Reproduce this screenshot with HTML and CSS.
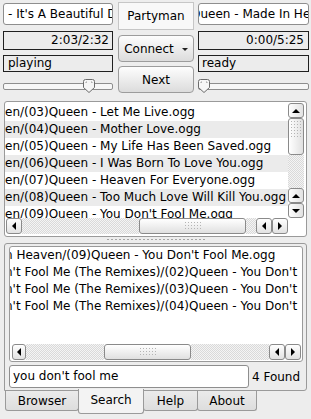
FILE: index.html
```html
<!DOCTYPE html>
<html lang="en">
  <head>
    <meta charset="UTF-8" />
    <meta name="viewport" content="width=device-width, initial-scale=1.0" />
    <title>Partyman</title>
    <link rel="stylesheet" href="styles.css">
  </head>
  <body>
    <div class="top">
      <div class="side">
        <div class="title"><span>- It's A Beautiful Day</span></div>
        <div class="lcd">2:03/2:32</div>
        <div class="status">playing</div>
        <div class="slider">
          <span class="knob" style="left: 80px">
            <svg width="12" height="14" viewBox="0 0 12 14"><path d="M0.5 2.5Q0.5 0.5 2.5 0.5H9.5Q11.5 0.5 11.5 2.5V8.5L6 13.5L0.5 8.5Z" fill="#f6f6f6" stroke="#6c6c6c"/><path d="M3 4V3H4M8 3H9V4" fill="none" stroke="#a0a0a0"/></svg>
          </span>
        </div>
      </div>
      <div class="mid">
        <div class="brand">Partyman</div>
        <button class="btn">Connect<span class="caret"></span></button>
        <button class="btn">Next</button>
      </div>
      <div class="side right">
        <div class="title"><span>Queen - Made In Heaven</span></div>
        <div class="lcd">0:00/5:25</div>
        <div class="status">ready</div>
        <div class="slider">
          <span class="knob" style="left: 0px">
            <svg width="12" height="14" viewBox="0 0 12 14"><path d="M0.5 2.5Q0.5 0.5 2.5 0.5H9.5Q11.5 0.5 11.5 2.5V8.5L6 13.5L0.5 8.5Z" fill="#f6f6f6" stroke="#6c6c6c"/><path d="M3 4V3H4M8 3H9V4" fill="none" stroke="#a0a0a0"/></svg>
          </span>
        </div>
      </div>
    </div>

    <div class="playlist">
      <div class="list">
        <div class="row">en/(03)Queen - Let Me Live.ogg</div>
        <div class="row alt">en/(04)Queen - Mother Love.ogg</div>
        <div class="row">en/(05)Queen - My Life Has Been Saved.ogg</div>
        <div class="row alt">en/(06)Queen - I Was Born To Love You.ogg</div>
        <div class="row">en/(07)Queen - Heaven For Everyone.ogg</div>
        <div class="row alt">en/(08)Queen - Too Much Love Will Kill You.ogg</div>
        <div class="row">en/(09)Queen - You Don't Fool Me.ogg</div>
      </div>
      <div class="vscroll">
        <span class="sbtn up"></span>
        <span class="vthumb"><i class="grip"></i></span>
        <span class="trough"></span>
        <span class="sbtn up"></span>
        <span class="sbtn down"></span>
      </div>
      <div class="hscroll">
        <span class="sbtn left"></span>
        <span class="trough"></span>
        <span class="hthumb wide"><i class="grip"></i></span>
        <span class="trough gap"></span>
        <span class="sbtn left"></span>
        <span class="sbtn right"></span>
      </div>
      <div class="corner"></div>
    </div>

    <div class="splitter"><i></i></div>

    <div class="pane">
      <div class="results">
        <div class="list">
          <div class="row">n Heaven/(09)Queen - You Don't Fool Me.ogg</div>
          <div class="row">n't Fool Me (The Remixes)/(02)Queen - You Don't Fool Me</div>
          <div class="row">n't Fool Me (The Remixes)/(03)Queen - You Don't Fool Me</div>
          <div class="row">n't Fool Me (The Remixes)/(04)Queen - You Don't Fool Me</div>
        </div>
        <div class="hscroll">
          <span class="sbtn left"></span>
          <span class="trough"></span>
          <span class="hthumb narrow"><i class="grip"></i></span>
          <span class="trough"></span>
          <span class="sbtn left"></span>
          <span class="sbtn right"></span>
        </div>
      </div>
      <div class="search-row">
        <div class="search-input">you don't fool me</div>
        <span class="found">4 Found</span>
      </div>
    </div>

    <div class="tabs">
      <div class="tab browser">Browser</div>
      <div class="tab search on">Search</div>
      <div class="tab help">Help</div>
      <div class="tab about">About</div>
    </div>
  </body>
</html>
```

FILE: styles.css
```css
* {
  box-sizing: border-box;
}
body {
  margin: 0;
  width: 311px;
  height: 419px;
  overflow: hidden;
  background: #ededed;
  font-family: "DejaVu Sans", "Noto Sans", sans-serif;
  font-size: 12px;
  color: #000;
}

/* top player controls */
.top {
  display: grid;
  grid-template-columns: 110px 85px 111px;
  height: 94px;
  padding-left: 3px;
}
.side {
  display: flex;
  flex-direction: column;
  padding-top: 3px;
}
.title {
  height: 22px;
  border: 1px solid #8e8e8e;
  border-radius: 3px;
  background: #fff;
  padding: 0 4px;
  line-height: 20px;
  white-space: nowrap;
  overflow: hidden;
}
.right .title {
  padding-left: 0;
}
.right .title span {
  margin-left: -8px;
}
.lcd {
  margin-top: 6px;
  height: 19px;
  border: 1px solid #202020;
  background: #ececec;
  text-align: right;
  padding-right: 3px;
  line-height: 17px;
}
.right .lcd {
  padding-right: 4px;
}
.status {
  margin-top: 5px;
  height: 17px;
  border: 1px solid #202020;
  background: #ececec;
  padding-left: 4px;
  line-height: 15px;
}
.right .status {
  padding-left: 3px;
}
.slider {
  position: relative;
  margin-top: 4px;
  height: 17px;
}
.slider::before {
  content: "";
  position: absolute;
  left: 0;
  right: 0;
  top: 7px;
  height: 5px;
  border: 1px solid #8e8e8e;
  border-radius: 2px;
  background: #f7f7f7;
}
.knob {
  position: absolute;
  top: 3px;
  width: 12px;
  height: 14px;
}
.knob svg {
  display: block;
}
.mid {
  display: flex;
  flex-direction: column;
  margin: 0 4px 0 5px;
  padding-top: 2px;
}
.brand {
  height: 28px;
  border: 1px solid #c6c6c6;
  background: #f8f8f8;
  text-align: center;
  line-height: 26px;
}
.btn {
  margin-top: 5px;
  height: 27px;
  padding: 0;
  border: 1px solid #9c9c9c;
  border-radius: 4px;
  background: linear-gradient(#fdfdfd, #dcdcdc);
  font: inherit;
  color: #000;
}
.btn + .btn {
  margin-top: 4px;
}
.caret {
  display: inline-block;
  margin-left: 8px;
  vertical-align: middle;
  border-style: solid;
  border-width: 3px 3px 0;
  border-color: #222 transparent transparent;
}

/* lists */
.playlist {
  margin: 7px 4px 0;
  height: 136px;
  border: 1px solid #9a9a9a;
  border-radius: 3px;
  background: #fff;
  padding: 1px 2px 2px 0;
  display: grid;
  grid-template-columns: minmax(0, 1fr) 16px;
  grid-template-rows: minmax(0, 1fr) 16px;
}
.list {
  overflow: hidden;
  padding-top: 1px;
}
.row {
  height: 17px;
  line-height: 17px;
  white-space: nowrap;
}
.row.alt {
  background: #ebebeb;
}
.vscroll {
  display: flex;
  flex-direction: column;
}
.hscroll {
  display: flex;
  padding-left: 1px;
}
.corner {
  background: #fff;
}
.sbtn {
  flex: none;
  display: flex;
  align-items: center;
  justify-content: center;
  width: 16px;
  height: 15px;
  border: 1px solid #8a8a8a;
  border-radius: 3px;
  background: linear-gradient(90deg, #fefefe, #e2e2e2);
}
.hscroll .sbtn {
  height: 16px;
  background: linear-gradient(#fefefe, #e2e2e2);
}
.sbtn::before {
  content: "";
  border-style: solid;
  border-color: transparent;
}
.up::before {
  border-width: 0 4px 4px;
  border-bottom-color: #000;
}
.down::before {
  border-width: 4px 4px 0;
  border-top-color: #000;
}
.left::before {
  border-width: 4px 4px 4px 0;
  border-right-color: #000;
}
.right::before {
  border-width: 4px 0 4px 4px;
  border-left-color: #000;
}
.trough {
  flex: 1;
  background: repeating-conic-gradient(#d9d9d9 0 25%, #f4f4f4 0 50%) 0 0 / 2px 2px;
}
.trough.gap {
  flex: none;
  width: 10px;
}
.vthumb,
.hthumb {
  flex: none;
  display: flex;
  justify-content: center;
  border: 1px solid #8a8a8a;
  border-radius: 3px;
}
.vthumb {
  height: 37px;
  padding-top: 2px;
  background: linear-gradient(90deg, #ffffff, #e0e0e0);
}
.hthumb {
  align-items: center;
  background: linear-gradient(#ffffff, #e0e0e0);
}
.hthumb.wide {
  width: 107px;
}
.hthumb.narrow {
  width: 87px;
}
.grip {
  background: conic-gradient(at 1px 1px, transparent 75%, #b4b4b4 0) 0 0 / 3px 3px;
}
.vthumb .grip {
  width: 10px;
  height: 18px;
}
.hthumb .grip {
  width: 16px;
  height: 8px;
}
.splitter {
  display: flex;
  justify-content: center;
  height: 6px;
  padding-top: 2px;
}
.splitter i {
  width: 98px;
  height: 1px;
  background: repeating-linear-gradient(90deg, #a6a6a6 0 2px, transparent 2px 4px);
}

/* search pane */
.pane {
  margin: 0 4px;
  height: 148px;
  border: 1px solid #9a9a9a;
  border-radius: 3px 3px 3px 0;
  padding: 2px 3px 2px 4px;
}
.results {
  height: 116px;
  border: 1px solid #9a9a9a;
  border-radius: 3px;
  background: #fff;
  padding: 0 1px 1px 0;
  display: grid;
  grid-template-rows: minmax(0, 1fr) 16px;
  grid-template-columns: minmax(0, 1fr);
}
.results .list {
  padding-top: 0;
}
.results .row {
  text-indent: -5px;
}
.results .hscroll {
  padding-left: 2px;
}
.results .sbtn:first-child {
  width: 14px;
}
.search-row {
  display: flex;
  align-items: center;
  margin-top: 3px;
  height: 23px;
}
.search-input {
  width: 240px;
  height: 23px;
  border: 1px solid #8e8e8e;
  border-radius: 3px;
  background: #fff;
  padding-left: 3px;
  line-height: 21px;
}
.found {
  margin-left: 3px;
  white-space: nowrap;
}
.tabs {
  display: flex;
  align-items: flex-start;
  padding-left: 5px;
}
.tab {
  height: 20px;
  border: 1px solid #9a9a9a;
  border-top: none;
  border-radius: 0 0 3px 3px;
  background: linear-gradient(#ebebeb, #dddddd);
  text-align: center;
  line-height: 20px;
}
.tab + .tab {
  margin-left: -1px;
}
.tab.on {
  position: relative;
  margin-top: -2px;
  height: 25px;
  background: #f3f3f3;
  line-height: 22px;
}
.browser {
  width: 74px;
}
.search {
  width: 66px;
}
.help {
  width: 55px;
}
.about {
  width: 60px;
}
```
